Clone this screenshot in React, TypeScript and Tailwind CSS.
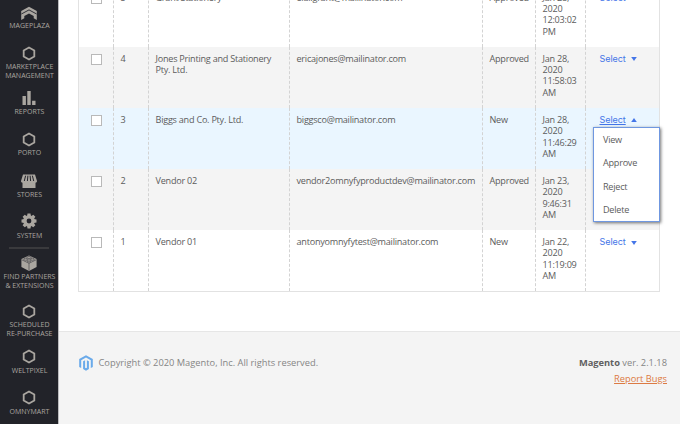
import type { ReactNode } from "react";

const Hexagon = () => (
  <svg width="14" height="16" viewBox="0 0 14 16" fill="none" stroke="#aaa6a0" strokeWidth="1.8">
    <path d="M7 2.500 12.3 5.500v6L7 14.500 1.700 11.500V5.500Z" />
  </svg>
);

const Mageplaza = () => (
  <svg width="16" height="16" viewBox="0 0 16 16" fill="#aaa6a0">
    <path d="M8 1.800 15.800 6V14.900L12.700 13.200V11.100L8 8.500 3.300 11.100V13.200L.2 14.900V6Z" />
    <path d="M.4 9 8 4.900 15.600 9" fill="none" stroke="#22222a" strokeWidth=".9" />
  </svg>
);

const Reports = () => (
  <svg width="14" height="16" viewBox="0 0 14 16" fill="#aaa6a0">
    <path d="M.5 6h3.400v9H.5zM5.300 1h3.400v14H5.300zM10.100 10.700h3.400V15h-3.400z" />
  </svg>
);

const Stores = () => (
  <svg width="18" height="16" viewBox="0 0 18 16" fill="#aaa6a0">
    <path d="M3 1.500h12l2 6.500c0 1-.6 1.600-1.500 1.800V15h-13V9.800C1.600 9.600 1 9 1 8Z" />
    <path d="M5.600 2.700 4.300 8M7.900 2.700 7.400 8M10.100 2.700l.5 5.300M12.400 2.700l1.300 5.300" stroke="#22222a" strokeWidth="1" />
  </svg>
);

const Gear = () => (
  <svg width="16" height="16" viewBox="0 0 16 16">
    <g fill="#aaa6a0">
      <circle cx="8" cy="8" r="5.800" />
      <path d="M6.500.5h3l.5 3H6zM6.500 15.500h3l.5-3H6z" />
      <path d="M6.500.5h3l.5 3H6zM6.500 15.500h3l.5-3H6z" transform="rotate(45 8 8)" />
      <path d="M6.500.5h3l.5 3H6zM6.500 15.500h3l.5-3H6z" transform="rotate(90 8 8)" />
      <path d="M6.500.5h3l.5 3H6zM6.500 15.500h3l.5-3H6z" transform="rotate(135 8 8)" />
    </g>
    <circle cx="8" cy="8" r="2.400" fill="#22222a" />
  </svg>
);

const Brick = () => (
  <svg width="16" height="16" viewBox="0 0 16 16">
    <path d="M8 .4 15.600 4v8L8 15.900.4 12V4Z" fill="#aaa6a0" />
    <path d="M.6 4.700 8 8.300l7.400-3.600M8 8.300v7.400" fill="none" stroke="#22222a" strokeWidth=".5" />
    <g fill="#aaa6a0" stroke="#22222a" strokeWidth=".5">
      <ellipse cx="8" cy="2.500" rx="2" ry="1" />
      <ellipse cx="4.600" cy="4.200" rx="2" ry="1" />
      <ellipse cx="11.400" cy="4.200" rx="2" ry="1" />
      <ellipse cx="8" cy="5.900" rx="2" ry="1" />
    </g>
  </svg>
);

type NavItem = { icon: ReactNode; lines: string[]; height: string; gap: string; divider?: boolean };

const nav: NavItem[] = [
  { icon: <Mageplaza />, lines: ["MAGEPLAZA"], height: "h-[40px]", gap: "mt-0" },
  { icon: <Hexagon />, lines: ["MARKETPLACE", "MANAGEMENT"], height: "h-[45px]", gap: "mt-[1px]" },
  { icon: <Reports />, lines: ["REPORTS"], height: "h-[41px]", gap: "mt-[1px]" },
  { icon: <Hexagon />, lines: ["PORTO"], height: "h-[42px]", gap: "mt-[1px]" },
  { icon: <Stores />, lines: ["STORES"], height: "h-[40px]", gap: "mt-[1px]" },
  { icon: <Gear />, lines: ["SYSTEM"], height: "h-[42px]", gap: "mt-[2px]", divider: true },
  { icon: <Brick />, lines: ["FIND PARTNERS", "& EXTENSIONS"], height: "h-[48px]", gap: "mt-[1px]" },
  { icon: <Hexagon />, lines: ["SCHEDULED", "RE-PURCHASE"], height: "h-[45px]", gap: "mt-[1px]" },
  { icon: <Hexagon />, lines: ["WELTPIXEL"], height: "h-[41px]", gap: "mt-[2px]" },
  { icon: <Hexagon />, lines: ["OMNYMART"], height: "h-[35px]", gap: "mt-[2px]" },
];

const rows = [
  { id: "5", name: "Grant Stationery", email: "elai.grant@mailinator.com", status: "Approved", date: ["Jan 28,", "2020", "12:03:02", "PM"], bg: "bg-white" },
  { id: "4", name: "Jones Printing and Stationery Pty. Ltd.", email: "ericajones@mailinator.com", status: "Approved", date: ["Jan 28,", "2020", "11:58:03", "AM"], bg: "bg-[#f4f4f4]" },
  { id: "3", name: "Biggs and Co. Pty. Ltd.", email: "biggsco@mailinator.com", status: "New", date: ["Jan 28,", "2020", "11:46:29", "AM"], bg: "bg-[#eaf6ff]", open: true },
  { id: "2", name: "Vendor 02", email: "vendor2omnyfyproductdev@mailinator.com", status: "Approved", date: ["Jan 23,", "2020", "9:46:31", "AM"], bg: "bg-[#f4f4f4]" },
  { id: "1", name: "Vendor 01", email: "antonyomnyfytest@mailinator.com", status: "New", date: ["Jan 22,", "2020", "11:19:09", "AM"], bg: "bg-white" },
];

const cell = "border-l border-dashed border-[#d3d3d3] pl-[6.500px] pt-[5.500px]";

function ActionMenu() {
  return (
    <ul className="absolute left-[7px] top-[19px] z-10 h-[95px] w-[67px] border border-[#6f97e0] bg-white pl-[9px] leading-[23.300px] shadow-[1px_1px_3px_rgba(0,0,0,0.55)]">
      <li>View</li>
      <li>Approve</li>
      <li>Reject</li>
      <li>Delete</li>
    </ul>
  );
}

export default function App() {
  return (
    <div className="flex h-[424px] w-[680px] overflow-hidden bg-white font-['Open_Sans',sans-serif]">
      <aside className="w-[58px] shrink-0 bg-[#222329] pl-px pt-[5px]">
        {nav.map((item) => (
          <div key={item.lines[0]} className={`flex flex-col items-center ${item.height}`}>
            <div className="flex h-4 shrink-0 items-center justify-center pr-px">{item.icon}</div>
            <div className={`whitespace-nowrap text-center text-[7px] leading-[9px] text-[#aaa6a0] ${item.gap}`}>
              {item.lines.map((line) => (
                <div key={line}>{line}</div>
              ))}
            </div>
            {item.divider && <div className="mr-px mt-[7px] h-[2px] w-[40px] shrink-0 bg-[#3a3a3d]" />}
          </div>
        ))}
      </aside>

      <main className="flex min-w-0 flex-1 flex-col border-l border-[#bcbcbe]">
        <div className="h-[331px] shrink-0 pl-[19px]">
          <div className="-mt-[15px] w-[582px] border border-[#e2e2e2] text-[9.100px] leading-[11.400px] tracking-[-0.240px] text-[#5c5c5c]">
            {rows.map((r) => (
              <div key={r.id} className={`relative grid h-[61.100px] grid-cols-[34px_35px_141px_193px_53px_50px_1fr] ${r.bg}`}>
                <div className="pl-[12px] pt-[7px]">
                  <div className="h-[11px] w-[11px] border border-[#b9b9b9] bg-white" />
                </div>
                <div className={cell}>{r.id}</div>
                <div className={`${cell} pr-[10px]`}>{r.name}</div>
                <div className={cell}>{r.email}</div>
                <div className={cell}>{r.status}</div>
                <div className={cell}>
                  {r.date.map((d) => (
                    <div key={d}>{d}</div>
                  ))}
                </div>
                <div className="relative border-l border-dashed border-[#d3d3d3] pl-[13.500px] pt-[5.500px]">
                  <div className="flex items-center text-[#4475e8]">
                    <span className={`font-['Inter',sans-serif] text-[9px] tracking-[-0.050px] ${r.open ? "underline" : ""}`}>Select</span>
                    <svg className={`ml-[5px] mt-[2px] ${r.open ? "rotate-180" : ""}`} width="6" height="4" viewBox="0 0 6 4" fill="currentColor">
                      <path d="M.2 0h5.600L3 4Z" />
                    </svg>
                  </div>
                  {r.open && <ActionMenu />}
                </div>
              </div>
            ))}
          </div>
        </div>

        <footer className="flex flex-1 items-start justify-between border-t border-[#e6e6e6] bg-[#f4f4f4] pl-[20px] pr-[13px] pt-[23px] text-[9.300px] text-[#858585]">
          <div className="flex items-center">
            <svg width="14" height="16" viewBox="0 0 14 16" fill="#6aaaea">
              <path d="M7 .2 13.800 4.100v7.800l-2 1.100V5.200L7 2.500 2.200 5.200V13l-2-1.100V4.100Z" />
              <path d="m4.100 6.300 2-1.100v7.600l.9.500.9-.5V5.200l2 1.100v7.800L7 15.800l-2.900-1.700Z" />
            </svg>
            <span className="ml-[5.500px]">Copyright © 2020 Magento, Inc. All rights reserved.</span>
          </div>
          <div className="text-right leading-[16px]">
            <div>
              <strong className="font-bold text-[#606060]">Magento</strong> ver. 2.1.18
            </div>
            <div className="text-[#dc7a43] underline">Report Bugs</div>
          </div>
        </footer>
      </main>
    </div>
  );
}
